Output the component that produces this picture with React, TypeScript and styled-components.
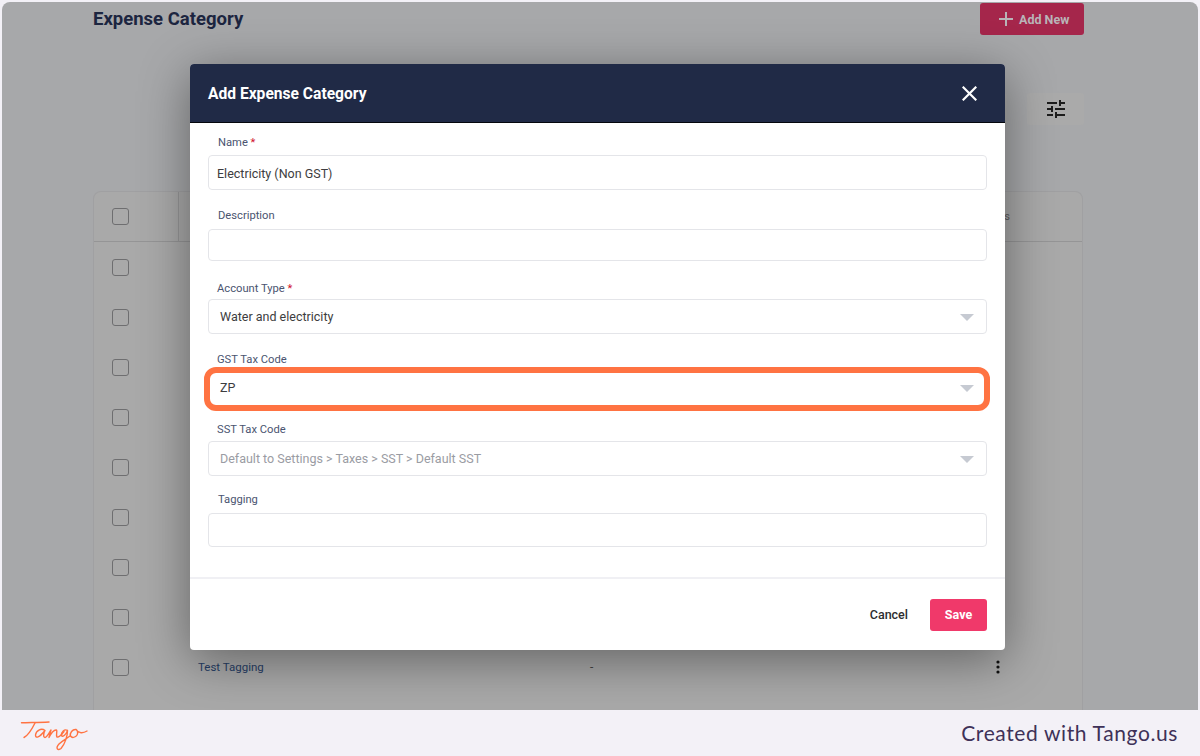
import React from "react";
import styled, { createGlobalStyle } from "styled-components";
import { MdTune } from "react-icons/md";

const Global = createGlobalStyle`
  html, body { margin: 0; padding: 0; width: 1200px; height: 756px; overflow: hidden; background: #f3f1f7; }
  * { box-sizing: border-box; }
  body { font-family: Roboto, "Liberation Sans", sans-serif; }
`;

const Page = styled.div`
  width: 1200px;
  height: 756px;
  display: flex;
  flex-direction: column;
  background: #f3f1f7;
`;
const Screen = styled.div`
  position: relative;
  height: 708px;
  margin: 2px 2px 0;
  border-radius: 8px 8px 0 0;
  background: #a7a8aa;
  overflow: hidden;
  padding: 0 115px 0 91px;
`;
const TopBar = styled.div`
  display: flex;
  justify-content: space-between;
  align-items: flex-start;
  height: 91px;
`;
const Title = styled.h1`
  margin: 6px 0 0;
  font-size: 18.5px;
  line-height: 22px;
  font-weight: 700;
  color: #1c2540;
`;
const AddButton = styled.div`
  margin-top: 1px;
  margin-right: -1px;
  width: 104px;
  height: 32px;
  padding-left: 19px;
  border-radius: 3px;
  background: #a5264b;
  color: #b9b4b8;
  display: flex;
  align-items: center;
  gap: 6px;
  font-size: 12.5px;
  font-weight: 700;
`;
const FilterRow = styled.div`
  display: flex;
  justify-content: flex-end;
  gap: 20px;
  height: 98px;
`;
const FilterButton = styled.div`
  width: 57px;
  height: 32px;
  border-radius: 3px;
  background: #aaaaaa;
  display: flex;
  align-items: center;
  justify-content: center;
  color: #1c1c1c;
  &:last-child {
    margin-right: -1px;
  }
`;
const Table = styled.div`
  background: #a9a9a9;
  border: 1px solid #a0a0a2;
  border-bottom: none;
  border-radius: 8px 8px 0 0;
  height: 620px;
`;
const HeaderRow = styled.div`
  display: flex;
  align-items: center;
  height: 50px;
  border-bottom: 1px solid #959596;
`;
const Row = styled.div`
  display: flex;
  align-items: center;
  height: 50px;
`;
const CheckCell = styled.div<{ $divider?: boolean }>`
  width: 85px;
  height: 100%;
  padding-left: 18px;
  display: flex;
  align-items: center;
  border-right: ${(p) => (p.$divider ? "1px solid #959596" : "none")};
  flex: none;
`;
const Check = styled.span`
  display: block;
  width: 17px;
  height: 17px;
  border: 1.5px solid #6e6e70;
  border-radius: 3px;
`;
const Name = styled.div`
  margin-left: 19px;
  width: 392px;
  font-size: 11.5px;
  color: #273e66;
`;
const Dash = styled.div`
  flex: 1;
  font-size: 12px;
  color: #444;
`;
const Kebab = styled.div`
  margin-right: 82px;
  display: flex;
  color: #111;
`;
const ActionsStub = styled.div`
  margin-left: auto;
  margin-right: 72px;
  font-size: 11px;
  color: #5c5c5e;
`;

const Modal = styled.div`
  position: absolute;
  left: 188px;
  top: 62px;
  width: 815px;
  height: 586px;
  background: #fff;
  border-radius: 4px;
  box-shadow: 0 10px 50px rgba(0, 0, 0, 0.42);
  display: flex;
  flex-direction: column;
`;
const ModalHeader = styled.div`
  flex: none;
  height: 59px;
  background: #202a46;
  border-radius: 4px 4px 0 0;
  border-bottom: 1px solid #05070d;
  display: flex;
  align-items: center;
  justify-content: space-between;
  padding: 0 28px 0 18px;
  color: #fff;
`;
const ModalTitle = styled.h2`
  margin: 2px 0 0;
  font-size: 15.6px;
  font-weight: 700;
`;
const ModalBody = styled.div`
  flex: none;
  height: 456px;
  padding: 0 18px;
  border-bottom: 2px solid #f0f0f4;
`;
const Field = styled.div<{ $h: number }>`
  height: ${(p) => p.$h}px;
  display: flex;
  flex-direction: column;
  justify-content: flex-end;
`;
const Label = styled.label<{ $indent: number; $gap: number }>`
  display: block;
  padding-left: ${(p) => p.$indent}px;
  margin-bottom: ${(p) => p.$gap}px;
  font-size: 11.2px;
  line-height: 14px;
  color: #4a5470;
`;
const Req = styled.span`
  color: #d0112b;
`;
const Input = styled.div<{ $h: number }>`
  position: relative;
  height: ${(p) => p.$h}px;
  border: 1px solid #e4e5e9;
  border-radius: 4px;
  background: #fff;
  display: flex;
  align-items: center;
  padding: 1px 0 0 8px;
  font-size: 12.5px;
  color: #3d3d40;
`;
const SelectValue = styled.span<{ $muted?: boolean }>`
  padding-left: 3px;
  margin-top: -2px;
  color: ${(p) => (p.$muted ? "#9a9ca3" : "#3d3d40")};
`;
const Caret = styled.span`
  position: absolute;
  right: 12px;
  top: 50%;
  margin-top: -3px;
  width: 0;
  height: 0;
  border-left: 7px solid transparent;
  border-right: 7px solid transparent;
  border-top: 7px solid #c6cad2;
`;
const Highlight = styled.div`
  position: absolute;
  left: -5px;
  right: -4px;
  top: -4px;
  bottom: -6px;
  border: 6px solid #ff7342;
  border-radius: 12px;
  pointer-events: none;
`;
const ModalFooter = styled.div`
  flex: 1;
  display: flex;
  align-items: center;
  justify-content: flex-end;
  gap: 22px;
  padding: 1px 18px 0 0;
`;
const Cancel = styled.span`
  font-size: 12.5px;
  font-weight: 500;
  color: #2d2d30;
  margin-top: -2px;
`;
const Save = styled.div`
  width: 57px;
  height: 32px;
  padding-bottom: 2px;
  border-radius: 3px;
  background: #f0396a;
  color: #fff;
  font-size: 12.5px;
  font-weight: 700;
  display: flex;
  align-items: center;
  justify-content: center;
`;
const Footer = styled.div`
  flex: 1;
  display: flex;
  align-items: center;
  justify-content: space-between;
  padding: 0 22px 0 20px;
`;
const Credit = styled.span`
  font-family: Lato, "Open Sans", sans-serif;
  font-size: 21px;
  letter-spacing: 0.61px;
  color: #3e3158;
  margin-top: -2px;
`;
const LogoMark = styled.svg`
  margin-top: 5px;
  fill: none;
  stroke: #ff7342;
  stroke-width: 1.4;
  stroke-linecap: round;
  stroke-linejoin: round;
`;

const rows = Array.from({ length: 9 });

const TangoLogo = () => (
  <LogoMark width="68" height="30" viewBox="0 0 68 30" role="img" aria-label="Tango logo">
    <path d="M1.5 1.8 C 9 1.5, 18 1.5, 29 1" />
    <path d="M15 2 C 12 8, 9 14, 4 16.5" />
    <path d="M25 9.5 C21 6.5 16 10 15.5 14 C15.5 17.5 19 17 25 9.5 C23.5 12 23 16.5 25 16.5 C27 16.5 29 12 31 9 C30.5 11 29.5 14 29 16.5 C31 12.5 34 9 36 9 C38 9 35.5 14 37 16 C39 17 42 13 44 10.5" />
    <path d="M47.5 9.5 C44.5 7.5 41 11 41.5 14.5 C42.5 17 46.5 13 47.5 9.5 C47.5 15 45 23 41 27.5 C38 30 35 27.5 39 23 C42 20 46 18 50 15" />
    <path d="M56 8.5 C52.5 8 49.5 12 50.5 15 C52.5 18 58.5 15.5 57.5 10.5 C57 9 56 8.5 56 8.5 C58.5 12.5 63 12.5 67 10" />
  </LogoMark>
);

export default function App() {
  return (
    <Page>
      <Global />
      <Screen>
        <TopBar>
          <Title>Expense Category</Title>
          <AddButton>
            <svg width="14" height="14" viewBox="0 0 14 14" stroke="#b9b4b8" strokeWidth="2"><path d="M7 0v14M0 7h14" /></svg>
            Add New
          </AddButton>
        </TopBar>
        <FilterRow>
          <FilterButton />
          <FilterButton>
            <MdTune size={24} />
          </FilterButton>
        </FilterRow>
        <Table>
          <HeaderRow>
            <CheckCell $divider><Check /></CheckCell>
            <ActionsStub>Actions</ActionsStub>
          </HeaderRow>
          {rows.map((_, i) => (
            <Row key={i}>
              <CheckCell><Check /></CheckCell>
              {i === 8 && (
                <>
                  <Name>Test Tagging</Name>
                  <Dash>-</Dash>
                  <Kebab>
                    <svg width="4" height="14" viewBox="0 0 4 14" fill="currentColor">
                      <circle cx="2" cy="2" r="1.6" /><circle cx="2" cy="7" r="1.6" /><circle cx="2" cy="12" r="1.6" />
                    </svg>
                  </Kebab>
                </>
              )}
            </Row>
          ))}
        </Table>
        <Modal>
          <ModalHeader>
            <ModalTitle>Add Expense Category</ModalTitle>
            <svg width="15" height="15" viewBox="0 0 15 15" stroke="#fff" strokeWidth="2.2" strokeLinecap="square"><path d="M1.5 1.5l12 12M13.5 1.5l-12 12" /></svg>
          </ModalHeader>
          <ModalBody>
            <Field $h={67}>
              <Label $indent={10} $gap={5}>Name <Req>*</Req></Label>
              <Input $h={35}>Electricity (Non GST)</Input>
            </Field>
            <Field $h={71}>
              <Label $indent={10} $gap={6}>Description</Label>
              <Input $h={32} />
            </Field>
            <Field $h={73}>
              <Label $indent={9} $gap={3}>Account Type <Req>*</Req></Label>
              <Input $h={35}><SelectValue>Water and electricity</SelectValue><Caret /></Input>
            </Field>
            <Field $h={72}>
              <Label $indent={9} $gap={3}>GST Tax Code</Label>
              <Input $h={36}>
                <SelectValue>ZP</SelectValue><Caret />
                <Highlight />
              </Input>
            </Field>
            <Field $h={70}>
              <Label $indent={9} $gap={4}>SST Tax Code</Label>
              <Input $h={35}><SelectValue $muted>Default to Settings &gt; Taxes &gt; SST &gt; Default SST</SelectValue><Caret /></Input>
            </Field>
            <Field $h={71}>
              <Label $indent={10} $gap={6}>Tagging</Label>
              <Input $h={34} />
            </Field>
          </ModalBody>
          <ModalFooter>
            <Cancel>Cancel</Cancel>
            <Save>Save</Save>
          </ModalFooter>
        </Modal>
      </Screen>
      <Footer>
        <TangoLogo />
        <Credit>Created with Tango.us</Credit>
      </Footer>
    </Page>
  );
}
